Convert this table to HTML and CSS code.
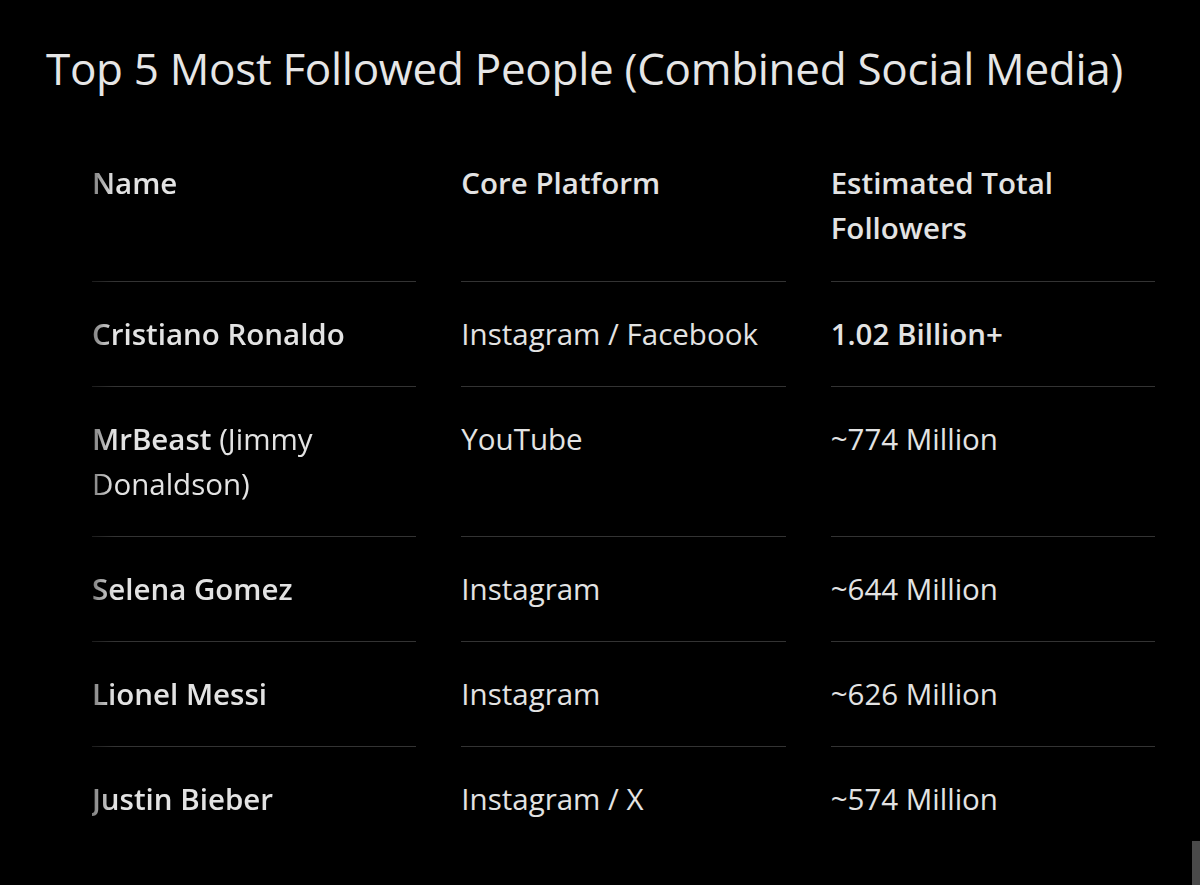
FILE: index.html
```html
<!DOCTYPE html>
<html lang="en">
<head>
<meta charset="utf-8">
<title>Top 5 Most Followed People</title>
<link rel="stylesheet" href="styles.css">
</head>
<body>
<main class="page">
  <h1 class="title">Top 5 Most Followed People (Combined Social Media)</h1>
  <div class="table">
    <div class="cell head name">Name</div>
    <div class="cell head">Core Platform</div>
    <div class="cell head">Estimated Total Followers</div>

    <div class="cell name"><b>Cristiano Ronaldo</b></div>
    <div class="cell">Instagram / Facebook</div>
    <div class="cell"><b>1.02 Billion+</b></div>

    <div class="cell name"><b>MrBeast</b> (Jimmy Donaldson)</div>
    <div class="cell">YouTube</div>
    <div class="cell">~774 Million</div>

    <div class="cell name"><b>Selena Gomez</b></div>
    <div class="cell">Instagram</div>
    <div class="cell">~644 Million</div>

    <div class="cell name"><b>Lionel Messi</b></div>
    <div class="cell">Instagram</div>
    <div class="cell">~626 Million</div>

    <div class="cell name last"><b>Justin Bieber</b></div>
    <div class="cell last">Instagram / X</div>
    <div class="cell last">~574 Million</div>
  </div>
</main>
<div class="scrollbar"></div>
</body>
</html>
```

FILE: styles.css
```css
html, body {
  margin: 0;
  padding: 0;
  background: #000;
  height: 100%;
  overflow: hidden;
}
body {
  font-family: "Open Sans", Roboto, Arial, sans-serif;
  color: #e3e3e3;
}
.page {
  padding: 41px 0 0 46px;
}
.title {
  margin: 0;
  font-size: 44px;
  line-height: 54px;
  font-weight: 400;
  color: #e6e6e6;
  letter-spacing: -0.3px;
}
.table {
  margin: 37px 0 0 46px;
  width: 1063px;
  display: grid;
  grid-template-columns: repeat(3, 1fr);
  column-gap: 45px;
}
.cell {
  font-size: 29.5px;
  line-height: 45px;
  padding: 29px 0 30px;
  border-bottom: 1px solid #333;
}
.cell.last {
  border-bottom: none;
}
.head {
  font-weight: 600;
  color: #e3e3e3;
  padding-top: 28px;
  padding-bottom: 31px;
}
.cell b {
  font-weight: 600;
}
.name {
  -webkit-mask-image: linear-gradient(to right, rgba(0,0,0,0.55) 0, #000 22px);
  mask-image: linear-gradient(to right, rgba(0,0,0,0.55) 0, #000 22px);
}
.scrollbar {
  position: fixed;
  right: 0;
  bottom: 0;
  width: 8px;
  height: 44px;
  background: #4a4a4a;
}
```
